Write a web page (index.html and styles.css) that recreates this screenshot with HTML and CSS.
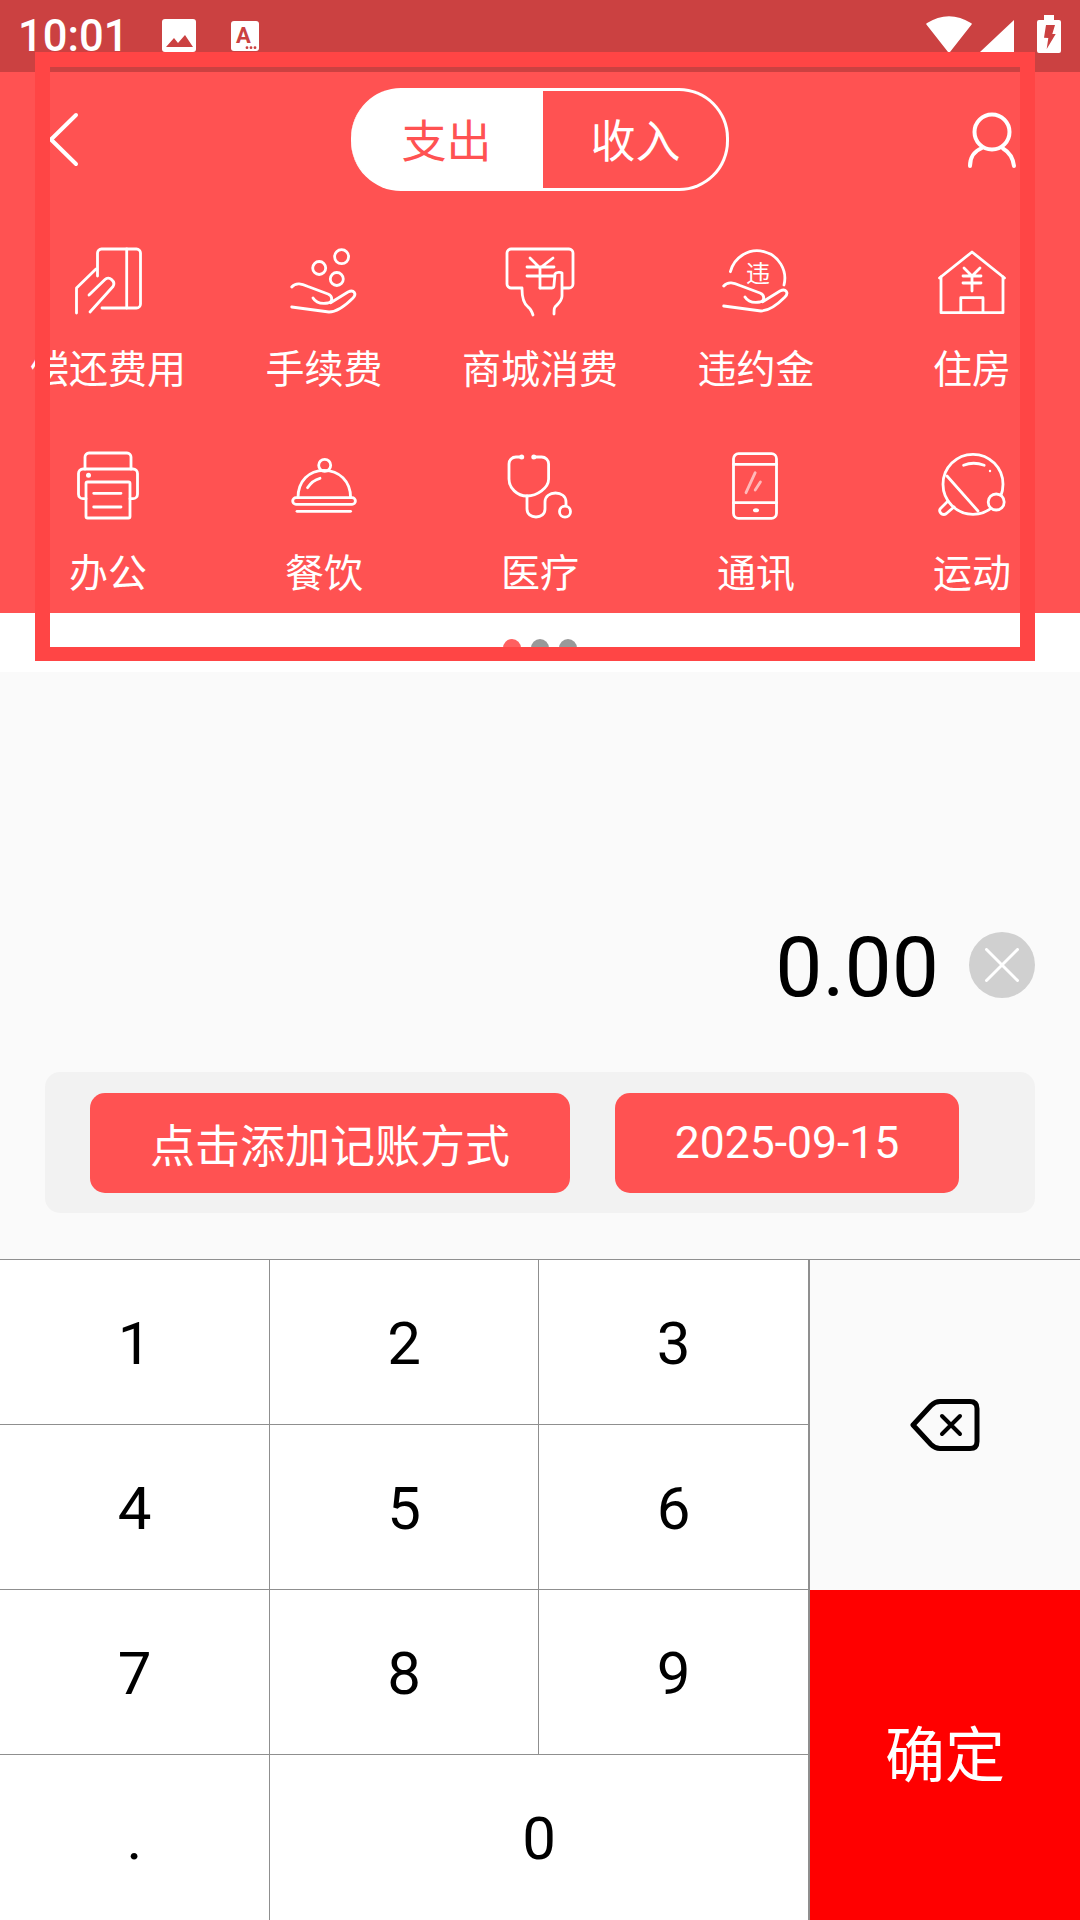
FILE: index.html
```html
<!DOCTYPE html>
<html>
<head>
  <title>记账</title>
  <link rel="stylesheet" href="styles.css">
</head>
<body>

<div class="page">
  <div class="status">
    <span class="time">10:01</span>
    <svg class="st-pic" width="34" height="72" viewBox="0 0 34 72">
      <rect x="0" y="19" width="34" height="33" rx="3" fill="#fff"/>
      <path d="M4 47L12 38l4 5 7-8 8 12z" fill="#cb4141"/>
    </svg>
    <svg class="st-a" width="28" height="72" viewBox="0 0 28 72">
      <rect x="0" y="21" width="28" height="30" rx="3" fill="#fff"/>
      <text class="st-a-letter" x="12.3" y="43" text-anchor="middle">A</text>
      <circle cx="16" cy="47.7" r="1.4" fill="#cb4141"/>
      <circle cx="20" cy="47.7" r="1.4" fill="#cb4141"/>
      <circle cx="24" cy="47.7" r="1.4" fill="#cb4141"/>
    </svg>
    <svg class="st-wifi" width="46" height="72" viewBox="0 0 46 72">
      <path d="M1 24Q23 10 45 24L23 52z" fill="#fff" stroke="#fff" stroke-width="1.5" stroke-linejoin="round"/>
    </svg>
    <svg class="st-signal" width="34" height="72" viewBox="0 0 34 72">
      <path d="M0 52L34 20V52z" fill="#fff"/>
    </svg>
    <svg class="st-batt" width="24" height="72" viewBox="0 0 24 72">
      <path d="M7 15h10v5h5a2 2 0 0 1 2 2v29a2 2 0 0 1-2 2H2a2 2 0 0 1-2-2V22a2 2 0 0 1 2-2h5z" fill="#fff"/>
      <path d="M9 25h9l-2.700 9h3.400L9.700 49l1.600-11-4.300-.3z" fill="#cb4141"/>
    </svg>
  </div>

  <div class="head">
    <div class="nav">
      <svg class="ico nav-ico" width="70" height="60" viewBox="0 0 70 60">
        <path d="M30 5L5 29.500 30 54"/>
      </svg>
      <div class="switch">
        <div class="switch-item on"><span>支出</span></div>
        <div class="switch-item"><span>收入</span></div>
      </div>
      <svg class="ico nav-ico" width="70" height="60" viewBox="0 0 70 60">
        <circle cx="28" cy="22" r="17.500"/>
        <path d="M18 38C10 41 6 48 6 56"/>
        <path d="M39 38.500C45 42 49 48 50 56"/>
      </svg>
    </div>

    <div class="cats">
      <div class="cat">
        <svg class="ico cat-ico" viewBox="0 0 72 72">
          <path d="M25.500 30V7a4 4 0 0 1 4-4h35a4 4 0 0 1 4 4v51a4 4 0 0 1-4 4H30"/>
          <path d="M54.700 3v59"/>
          <path d="M24 23L4.500 42v25"/>
          <path d="M17 49L33 33.500c4-4 11 2 8 7L18 66"/>
        </svg>
        <span>偿还费用</span>
      </div>
      <div class="cat">
        <svg class="ico cat-ico" viewBox="0 0 72 72">
          <circle cx="53.600" cy="10.700" r="7"/>
          <circle cx="31.200" cy="22" r="6.500"/>
          <circle cx="48.800" cy="33" r="6.500"/>
          <path d="M3.700 41C8 36 14 38 20 40.500L40 48c5 2 5 8 0 9-6 1-12 0-15-5"/>
          <path d="M42.600 56.700L60 46c6-3 9 2 5 6-7 7-15 14-24 14L3.700 61"/>
        </svg>
        <span>手续费</span>
      </div>
      <div class="cat">
        <svg class="ico cat-ico" viewBox="0 0 72 72">
          <path d="M18 42H7a4 4 0 0 1-4-4V7a4 4 0 0 1 4-4h58a4 4 0 0 1 4 4v31a4 4 0 0 1-4 4h-6"/>
          <path d="M26 12l10 10L49 12M23 21h27M23 30h27M36 22v20"/>
          <path d="M18 43c0 8 1 14 6 18 3 2 4 5 5 8"/>
          <path d="M36 42h12c1 0 2-1 2-3l1-11c1-2 6-2 7-1v23c0 4-2 6-5 9-3 2-3 4-3 9"/>
        </svg>
        <span>商城消费</span>
      </div>
      <div class="cat">
        <svg class="ico cat-ico" viewBox="0 0 72 72">
          <path d="M10.400 25.700A27 27 0 0 1 64 39"/>
          <text class="cat-ico-txt" x="38" y="36" text-anchor="middle">违</text>
          <path d="M3.700 40C8 35 14 37 20 39.500L40 47c5 2 5 8 0 9-6 1-12 0-15-5"/>
          <path d="M42.600 55.700L60 45c6-3 9 2 5 6-7 7-15 14-24 14L3.700 60"/>
        </svg>
        <span>违约金</span>
      </div>
      <div class="cat">
        <svg class="ico cat-ico" viewBox="0 0 72 72">
          <path d="M3.500 32L36 6l32.500 26"/>
          <path d="M5 31v35.700h62V31"/>
          <path d="M24.800 66.700V51.700H47v15"/>
          <path d="M28 22l8 8 8-8M27 30h18M27 37h18M36 30v15"/>
        </svg>
        <span>住房</span>
      </div>

      <div class="cat">
        <svg class="ico cat-ico" viewBox="0 0 72 72">
          <path d="M13 19V7a4 4 0 0 1 4-4h38a4 4 0 0 1 4 4v12"/>
          <path d="M14 48.700h-3a4.500 4.500 0 0 1-4.500-4.500V23.500A4.500 4.500 0 0 1 11 19h50a4.500 4.500 0 0 1 4.500 4.500v20.700a4.500 4.500 0 0 1-4.500 4.500h-3"/>
          <rect x="14" y="32" width="44" height="36" rx="1.500"/>
          <path d="M21.700 43.300H49M21.700 57H49"/>
          <circle class="solid" cx="16.500" cy="25.300" r="2.500"/>
        </svg>
        <span>办公</span>
      </div>
      <div class="cat">
        <svg class="ico cat-ico" viewBox="0 0 72 72">
          <rect x="4.700" y="47.700" width="62.700" height="6.600" rx="3.300"/>
          <path d="M10 47.700C10 31 21 20.300 36 20.300S62.600 31 62.600 47.700"/>
          <circle cx="36.700" cy="15.300" r="6"/>
          <path d="M19.500 37.700c3-4.500 7-8 12.500-9.400"/>
          <path d="M9 61.300h53.600"/>
        </svg>
        <span>餐饮</span>
      </div>
      <div class="cat">
        <svg class="ico cat-ico" viewBox="0 0 72 72">
          <path d="M17.700 7H12a7 7 0 0 0-7 7v15c0 9 8 17 18 17s21.600-8 21.600-17V14a7 7 0 0 0-7-7h-7"/>
          <circle class="solid" cx="17.700" cy="7" r="2.500"/>
          <circle class="solid" cx="29.800" cy="7" r="2.500"/>
          <path d="M23 46v13c0 5 4 8 9 8s9-3 9-8v-7c0-6 5-9 10.500-9S62 46 62 52v3"/>
          <circle cx="61" cy="61.700" r="5.500"/>
        </svg>
        <span>医疗</span>
      </div>
      <div class="cat">
        <svg class="ico cat-ico" viewBox="0 0 72 72">
          <rect x="13.500" y="3.700" width="43" height="64.600" rx="5"/>
          <path d="M13.500 14.300h43M13.500 52.700h43"/>
          <ellipse class="solid" cx="36" cy="60.300" rx="3" ry="2"/>
          <path class="glare" d="M35.200 22.700L26 42.700M40.400 32l-5.200 8"/>
        </svg>
        <span>通讯</span>
      </div>
      <div class="cat">
        <svg class="ico cat-ico" viewBox="0 0 72 72">
          <circle cx="37" cy="34.300" r="30"/>
          <path d="M11 26l31 35"/>
          <path d="M12 51l-7.500 7.500c-2 2 0 6 3.500 6 1 0 2-.5 3-1.500l7-6"/>
          <circle class="ball" cx="60.200" cy="52" r="8"/>
          <path d="M27.600 15.300c6-2.500 14-2.500 20.600 0"/>
          <circle class="solid" cx="54" cy="21" r="1.200"/>
        </svg>
        <span>运动</span>
      </div>
    </div>
  </div>

  <div class="dots">
    <i class="dot on"></i>
    <i class="dot"></i>
    <i class="dot"></i>
  </div>

  <div class="entry">
    <div class="amount">
      <span class="amount-num">0.00</span>
      <div class="clear">
        <svg width="34" height="34" viewBox="0 0 34 34">
          <path d="M1.500 1.500l31 31M32.500 1.500l-31 31" stroke="#fff" stroke-width="3" stroke-linecap="round"/>
        </svg>
      </div>
    </div>
    <div class="bar">
      <button class="bar-btn bar-way">点击添加记账方式</button>
      <button class="bar-btn bar-date">2025-09-15</button>
    </div>
  </div>

  <div class="keypad">
    <div class="key">1</div>
    <div class="key">2</div>
    <div class="key col3">3</div>
    <div class="key-back">
      <svg width="70" height="52" viewBox="0 0 70 52">
        <path d="M3 26L21 6.500Q25 2.500 30 2.500H60Q67 2.500 67 9.500V42.500Q67 49.500 60 49.500H30Q25 49.500 21 45.500z" fill="none" stroke="#000" stroke-width="5" stroke-linejoin="round"/>
        <path d="M32 17l18 18M50 17L32 35" stroke="#000" stroke-width="4" stroke-linecap="round"/>
      </svg>
    </div>
    <div class="key">4</div>
    <div class="key">5</div>
    <div class="key col3">6</div>
    <div class="key">7</div>
    <div class="key">8</div>
    <div class="key col3">9</div>
    <div class="key-ok"><span>确定</span></div>
    <div class="key key-last">.</div>
    <div class="key key-last col3 key-zero">0</div>
  </div>

  <div class="frame"></div>
</div>

</body>
</html>
```

FILE: styles.css
```css
body {
  margin: 0;
  font-family: Roboto, "Noto Sans CJK SC", sans-serif;
}
.page {
  position: relative;
  width: 1080px;
  height: 1920px;
  overflow: hidden;
  background: #fff;
}

/* status bar */
.status {
  display: flex;
  height: 72px;
  padding: 0 19px 0 18px;
  box-sizing: border-box;
  background: #cb4141;
  color: #fff;
}
.time {
  font-size: 43.5px;
  font-weight: 500;
  line-height: 74px;
  width: 108px;
}
.st-pic { margin-left: 36px; }
.st-a { margin-left: 35px; }
.st-wifi { margin-left: auto; }
.st-signal { margin-left: 8px; }
.st-batt { margin-left: 23px; }
.st-a-letter {
  font-size: 22px;
  font-weight: bold;
  fill: #cb4141;
}

/* red header */
.head {
  height: 541px;
  background: #ff5252;
  box-sizing: border-box;
  padding-top: 16px;
}
.nav {
  display: flex;
  align-items: center;
  justify-content: space-between;
  padding: 0 46px;
}
.ico {
  fill: none;
  stroke: #fff;
  stroke-width: 2.8;
  stroke-linecap: round;
  stroke-linejoin: round;
}
.nav-ico { stroke-width: 4; }
.ico .solid {
  fill: #fff;
  stroke: none;
}
.ico .glare { opacity: 0.6; }
.ico .ball { fill: #ff5252; }
.switch {
  display: flex;
  width: 378px;
  height: 103px;
  font-size: 45px;
  color: #fff;
}
.switch-item {
  flex: 1;
  display: flex;
  align-items: center;
  justify-content: center;
  box-sizing: border-box;
  border: 3px solid #fff;
  border-left: none;
  border-radius: 0 50px 50px 0;
}
.switch-item span { margin: 0 0 2px 2px; }
.switch-item.on {
  flex: 0 0 192px;
  background: #fff;
  color: #ff5252;
  border-radius: 50px 0 0 50px;
}
.cats {
  display: grid;
  grid-template-columns: repeat(5, 216px);
  row-gap: 55px;
  margin-top: 55px;
}
.cat {
  display: flex;
  flex-direction: column;
  align-items: center;
  font-size: 39px;
  line-height: 50px;
  color: #fff;
  white-space: nowrap;
}
.cat-ico {
  width: 72px;
  height: 72px;
  margin-bottom: 27px;
}
.cat-ico-txt {
  font-size: 24px;
  fill: #fff;
  stroke: none;
}

/* pager dots */
.dots {
  display: flex;
  justify-content: center;
  gap: 10px;
  height: 59px;
  padding-top: 26px;
  box-sizing: border-box;
}
.dot {
  width: 18px;
  height: 18px;
  border-radius: 50%;
  background: #999;
}
.dot.on { background: #ff6060; }

/* amount + bar */
.entry {
  height: 587px;
  box-sizing: border-box;
  padding: 260px 45px 0;
  background: #fafafa;
}
.amount {
  display: flex;
  align-items: center;
  justify-content: flex-end;
  height: 66px;
}
.amount-num {
  font-size: 84px;
  line-height: 66px;
  color: #000;
  margin: 6px 30px 0 0;
}
.clear {
  display: flex;
  align-items: center;
  justify-content: center;
  width: 66px;
  height: 66px;
  border-radius: 50%;
  background: #d0d0d0;
}
.bar {
  display: flex;
  gap: 45px;
  margin-top: 74px;
  padding: 21px 45px 20px;
  background: #f2f2f2;
  border-radius: 15px;
}
.bar-btn {
  height: 100px;
  padding: 0;
  border: none;
  border-radius: 15px;
  background: #ff5252;
  color: #fff;
  font-family: inherit;
  font-size: 45px;
}
.bar-way { width: 480px; }
.bar-date {
  width: 344px;
  font-size: 44.5px;
}

/* keypad */
.keypad {
  display: grid;
  grid-template-columns: 270px 269px 271px 270px;
  grid-template-rows: repeat(4, 165px);
  border-top: 1px solid #8f8f8f;
  background: #fff;
}
.key {
  display: flex;
  align-items: center;
  justify-content: center;
  box-sizing: border-box;
  padding-top: 2px;
  border-right: 1px solid #8f8f8f;
  border-bottom: 1px solid #8f8f8f;
  font-size: 60px;
  color: #000;
}
.key.col3 { border-right-width: 2px; }
.key-last { border-bottom: none; }
.key-zero { grid-column: span 2; }
.key-back {
  grid-column: 4;
  grid-row: 1 / span 2;
  display: flex;
  align-items: center;
  justify-content: center;
  background: #fafafa;
}
.key-ok {
  grid-column: 4;
  grid-row: 3 / span 2;
  display: flex;
  align-items: center;
  justify-content: center;
  background: #f00;
  color: #fff;
  font-size: 60px;
}
.key-ok span { margin-bottom: 10px; }

/* highlight box lying over the header */
.frame {
  position: absolute;
  left: 35px;
  top: 52px;
  width: 1000px;
  height: 609px;
  box-sizing: border-box;
  border: 15px solid #ff4545;
  border-bottom-width: 14px;
}
```
